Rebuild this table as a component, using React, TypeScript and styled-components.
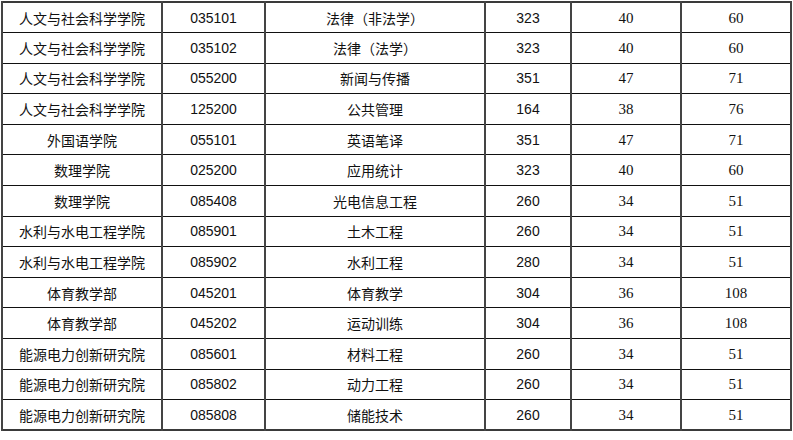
import React from 'react';
import styled, { createGlobalStyle } from 'styled-components';

const GlobalStyle = createGlobalStyle`
  html, body {
    margin: 0;
    padding: 0;
    background: #ffffff;
  }
  body {
    font-family: "Noto Sans CJK SC", "Liberation Sans", sans-serif;
  }
`;

const Page = styled.div`
  padding: 1px 0 0 1px;
  width: 793px;
  box-sizing: border-box;
`;

const Table = styled.table`
  border-collapse: collapse;
  table-layout: fixed;
  width: 791px;
  height: 430px;
  border: 2px solid #3a3a3a;
  box-shadow: 0 1px 0 #b8b8b8;
`;

const Row = styled.tr`
  height: 30.6px;
`;

type CellKind = 'cjk' | 'sans' | 'serif';

const Cell = styled.td<{ $kind: CellKind }>`
  padding: 0;
  text-align: center;
  vertical-align: middle;
  color: #111;
  font-size: ${(p) => (p.$kind === 'serif' ? '15px' : '14px')};
  line-height: 16px;
  border-top: 1.5px solid #111;
  border-bottom: 1.5px solid #111;
  border-left: 2px solid #444;
  border-right: 2px solid #444;
  white-space: nowrap;
  font-family: ${(p) =>
    p.$kind === 'serif'
      ? '"Liberation Serif", serif'
      : p.$kind === 'sans'
      ? '"Liberation Sans", sans-serif'
      : '"Noto Sans CJK SC", "Liberation Sans", sans-serif'};
`;

const widths = [160, 103, 220, 86, 110, 110];
const kinds: CellKind[] = ['cjk', 'sans', 'cjk', 'sans', 'serif', 'serif'];

const rows: string[][] = [
  ['人文与社会科学学院', '035101', '法律（非法学）', '323', '40', '60'],
  ['人文与社会科学学院', '035102', '法律（法学）', '323', '40', '60'],
  ['人文与社会科学学院', '055200', '新闻与传播', '351', '47', '71'],
  ['人文与社会科学学院', '125200', '公共管理', '164', '38', '76'],
  ['外国语学院', '055101', '英语笔译', '351', '47', '71'],
  ['数理学院', '025200', '应用统计', '323', '40', '60'],
  ['数理学院', '085408', '光电信息工程', '260', '34', '51'],
  ['水利与水电工程学院', '085901', '土木工程', '260', '34', '51'],
  ['水利与水电工程学院', '085902', '水利工程', '280', '34', '51'],
  ['体育教学部', '045201', '体育教学', '304', '36', '108'],
  ['体育教学部', '045202', '运动训练', '304', '36', '108'],
  ['能源电力创新研究院', '085601', '材料工程', '260', '34', '51'],
  ['能源电力创新研究院', '085802', '动力工程', '260', '34', '51'],
  ['能源电力创新研究院', '085808', '储能技术', '260', '34', '51'],
];

export default function App() {
  return (
    <Page>
      <GlobalStyle />
      <Table>
        <colgroup>
          {widths.map((w, i) => (
            <col key={i} style={{ width: w }} />
          ))}
        </colgroup>
        <tbody>
          {rows.map((r, i) => (
            <Row key={i}>
              {r.map((c, j) => (
                <Cell key={j} $kind={kinds[j]}>
                  {c}
                </Cell>
              ))}
            </Row>
          ))}
        </tbody>
      </Table>
    </Page>
  );
}
